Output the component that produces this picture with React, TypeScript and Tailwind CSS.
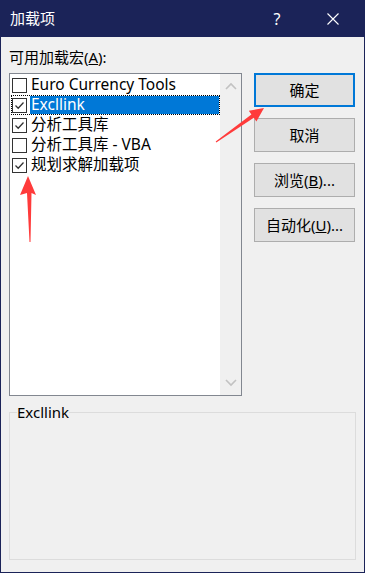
import { ReactNode } from "react";

const font = { fontFamily: '"Noto Sans", "Noto Sans CJK SC", sans-serif' };

const items = [
  { label: "Euro Currency Tools", checked: false },
  { label: "Excllink", checked: true, active: true },
  { label: "分析工具库", checked: true },
  { label: "分析工具库 - VBA", checked: false },
  { label: "规划求解加载项", checked: true },
];

const CheckBox = ({ checked }: { checked: boolean }) => (
  <div className="w-[15px] h-[15px] shrink-0 border border-[#333333] bg-white flex items-center justify-center">
    {checked && (
      <svg width="11" height="11" viewBox="0 0 11 11">
        <path d="M1.5 5.5 L4.2 8.2 L9.5 2.5" fill="none" stroke="#333" strokeWidth="1.3" />
      </svg>
    )}
  </div>
);

const Button = ({ children, primary }: { children: ReactNode; primary?: boolean }) => (
  <button
    type="button"
    className={
      primary
        ? "h-[34px] w-full bg-[#e1e1e1] border-2 border-[#0078d7] text-[15px] text-black"
        : "h-[34px] w-full bg-[#e1e1e1] border border-[#adadad] text-[15px] text-black"
    }>
    {children}
  </button>
);

const App = () => {
  return (
    <div
      className="relative w-[365px] h-[573px] flex flex-col bg-[#f0f0f0] border-x border-b border-[#1b2358] overflow-hidden"
      style={font}>
      <div className="h-[37px] shrink-0 bg-[#1b2358] flex items-center text-white -mx-px">
        <span className="pl-[10px] text-[15px] flex-1">加载项</span>
        <span className="text-[16px] w-[20px] mr-[40px] text-center">?</span>
        <svg width="12" height="12" viewBox="0 0 12 12" className="mr-[26px]">
          <path d="M0.5 0.5 L11.5 11.5 M11.5 0.5 L0.5 11.5" stroke="white" strokeWidth="1.1" />
        </svg>
      </div>

      <div className="flex-1 flex flex-col px-[8px]">
        <div className="h-[36px] flex items-center text-[15px] text-black pt-[9px] pb-[4px]">
          可用加载宏(<span className="underline">A</span>):
        </div>
        <div className="flex gap-[12px]">
          <div className="w-[233px] h-[323px] border border-[#828790] bg-white flex">
            <div className="flex-1 pt-[1px] pl-[1px]">
              {items.map((it) => (
                <div
                  key={it.label}
                  className={
                    it.active
                      ? "h-[20px] flex items-center border border-dotted border-black"
                      : "h-[20px] flex items-center border border-transparent"
                  }>
                  <CheckBox checked={it.checked} />
                  <span
                    className={
                      it.active
                        ? "ml-[3px] pl-[1px] flex-1 h-full flex items-center bg-[#0078d7] text-white text-[15.5px] leading-none"
                        : "ml-[3px] pl-[1px] flex-1 h-full flex items-center text-black text-[15.5px] leading-none"
                    }>
                    {it.label}
                  </span>
                </div>
              ))}
            </div>
            <div className="w-[21px] bg-[#f0f0f0] flex flex-col items-center justify-between py-[8px]">
              <svg width="12" height="8" viewBox="0 0 12 8">
                <path d="M1 7 L6 2 L11 7" fill="none" stroke="#c2c2c2" strokeWidth="1.6" />
              </svg>
              <svg width="12" height="8" viewBox="0 0 12 8">
                <path d="M1 1 L6 6 L11 1" fill="none" stroke="#c2c2c2" strokeWidth="1.6" />
              </svg>
            </div>
          </div>
          <div className="w-[101px] flex flex-col gap-[11px]">
            <Button primary>确定</Button>
            <Button>取消</Button>
            <Button>
              浏览(<span className="underline">B</span>)...
            </Button>
            <Button>
              自动化(<span className="underline">U</span>)...
            </Button>
          </div>
        </div>

        <fieldset className="mt-[7px] h-[157px] border border-[#dcdcdc] px-[7px]">
          <legend className="text-[15px] text-black leading-[18px]">Excllink</legend>
        </fieldset>
      </div>

      <svg className="absolute inset-0 pointer-events-none" width="365" height="573" viewBox="0 0 365 573">
        <polygon
          points="214.7,141.6 250.4,114.5 247.8,110.8 263,108 255.4,121.4 252.8,117.7 215.3,142.4"
          fill="#ff3b3b"
        />
        <polygon points="27,176 35,195 30.5,193 29.5,242 28.5,242 26,193 19,195" fill="#ff3b3b" />
      </svg>
    </div>
  );
};

export default App;
